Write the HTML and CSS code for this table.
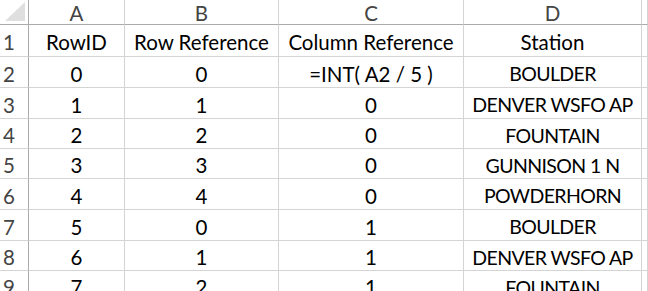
FILE: index.html
```html
<!DOCTYPE html>
<html>
<head>
<meta charset="utf-8">
<link rel="stylesheet" href="styles.css">
</head>
<body>
<div class="sheet">
  <div class="corner"><div class="tri"></div></div>
  <div class="ch">A</div><div class="ch">B</div><div class="ch">C</div><div class="ch">D</div><div class="ch"></div>

  <div class="rh">1</div><div class="c">RowID</div><div class="c">Row Reference</div><div class="c">Column Reference</div><div class="c">Station</div><div class="c"></div>
  <div class="rh">2</div><div class="c">0</div><div class="c">0</div><div class="c">=INT( A2 / 5 )</div><div class="c st">BOULDER</div><div class="c"></div>
  <div class="rh">3</div><div class="c">1</div><div class="c">1</div><div class="c">0</div><div class="c st">DENVER WSFO AP</div><div class="c"></div>
  <div class="rh">4</div><div class="c">2</div><div class="c">2</div><div class="c">0</div><div class="c st">FOUNTAIN</div><div class="c"></div>
  <div class="rh">5</div><div class="c">3</div><div class="c">3</div><div class="c">0</div><div class="c st">GUNNISON 1 N</div><div class="c"></div>
  <div class="rh">6</div><div class="c">4</div><div class="c">4</div><div class="c">0</div><div class="c st">POWDERHORN</div><div class="c"></div>
  <div class="rh">7</div><div class="c">5</div><div class="c">0</div><div class="c">1</div><div class="c st">BOULDER</div><div class="c"></div>
  <div class="rh">8</div><div class="c">6</div><div class="c">1</div><div class="c">1</div><div class="c st">DENVER WSFO AP</div><div class="c"></div>
  <div class="rh">9</div><div class="c">7</div><div class="c">2</div><div class="c">1</div><div class="c st">FOUNTAIN</div><div class="c"></div>
</div>
</body>
</html>
```
FILE: styles.css
```css
html, body {
  margin: 0;
  padding: 0;
  background: #ffffff;
  overflow: hidden;
}
.sheet {
  display: grid;
  grid-template-columns: 29px 96px 154px 185px 178px 6px;
  grid-template-rows: 25px 32px 31px 31px 30px 30px 31px 31px 30px 30px;
  font-family: Lato, "Open Sans", sans-serif;
  font-size: 20.5px;
  color: #000;
  width: 648px;
  height: 291px;
  overflow: hidden;
}
.sheet > div {
  box-sizing: border-box;
  border-right: 1px solid #d4d4d4;
  border-bottom: 1px solid #d4d4d4;
  display: flex;
  align-items: center;
  justify-content: center;
  white-space: nowrap;
  overflow: hidden;
}
.corner {
  position: relative;
  border-right-color: #ababab !important;
  border-bottom-color: #ababab !important;
}
.tri {
  position: absolute;
  right: 3px;
  bottom: 3px;
  width: 0;
  height: 0;
  border-left: 20px solid transparent;
  border-bottom: 19px solid #dfdfdf;
}
.ch {
  color: #444;
  border-bottom-color: #ababab !important;
  padding-top: 1px;
}
.rh {
  color: #444;
  justify-content: flex-start !important;
  padding-left: 3px;
  padding-top: 3px;
  border-right-color: #ababab !important;
}
.c {
  padding-top: 3px;
}
.st {
  font-size: 19.5px;
  letter-spacing: -0.6px;
}
```
